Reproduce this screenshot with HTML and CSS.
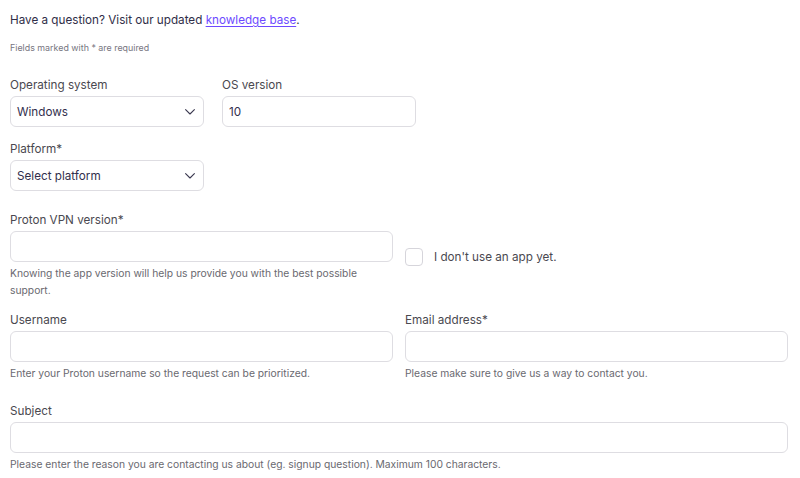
FILE: index.html
```html
<!DOCTYPE html>
<html lang="en">
<head>
<meta charset="utf-8">
<title>Support form</title>
<link rel="stylesheet" href="styles.css">
</head>
<body>
<form class="form">
  <p class="intro">Have a question? Visit our updated <a href="#" class="link">knowledge base</a>.</p>
  <p class="required-note">Fields marked with * are required</p>

  <div class="row row-small first">
    <div class="field field-narrow">
      <label class="label">Operating system</label>
      <div class="control select">
        <span class="value">Windows</span>
        <svg class="chevron" viewBox="0 0 10 6" width="10" height="6"><path d="M0.6 0.6L5 5L9.4 0.6" fill="none" stroke="#3b3950" stroke-width="1.1" stroke-linecap="round" stroke-linejoin="round"/></svg>
      </div>
    </div>
    <div class="field field-narrow">
      <label class="label">OS version</label>
      <div class="control"><span class="value">10</span></div>
    </div>
  </div>

  <div class="row row-small">
    <div class="field field-narrow">
      <label class="label">Platform*</label>
      <div class="control select">
        <span class="value">Select platform</span>
        <svg class="chevron" viewBox="0 0 10 6" width="10" height="6"><path d="M0.6 0.6L5 5L9.4 0.6" fill="none" stroke="#3b3950" stroke-width="1.1" stroke-linecap="round" stroke-linejoin="round"/></svg>
      </div>
    </div>
  </div>

  <div class="row row-half version-row">
    <div class="field">
      <label class="label">Proton VPN version*</label>
      <div class="control"></div>
      <p class="hint">Knowing the app version will help us provide you with the best possible support.</p>
    </div>
    <div class="field check-field">
      <span class="checkbox"></span>
      <span class="check-label">I don't use an app yet.</span>
    </div>
  </div>

  <div class="row row-half account-row">
    <div class="field">
      <label class="label">Username</label>
      <div class="control"></div>
      <p class="hint">Enter your Proton username so the request can be prioritized.</p>
    </div>
    <div class="field">
      <label class="label">Email address*</label>
      <div class="control"></div>
      <p class="hint">Please make sure to give us a way to contact you.</p>
    </div>
  </div>

  <div class="row subject-row">
    <div class="field field-full">
      <label class="label">Subject</label>
      <div class="control"></div>
      <p class="hint">Please enter the reason you are contacting us about (eg. signup question). Maximum 100 characters.</p>
    </div>
  </div>
</form>
</body>
</html>
```

FILE: styles.css
```css
* { box-sizing: border-box; }

html, body {
  margin: 0;
  background: #ffffff;
}

body {
  font-family: Inter, "Noto Sans", sans-serif;
  color: #2e2c45;
}

.form {
  padding: 11px 12px 0 10px;
  width: 800px;
}

.intro {
  margin: 0;
  font-size: 11.7px;
  line-height: 18px;
  color: #302e48;
}

.link {
  color: #6d4aff;
  text-decoration: underline;
  text-underline-offset: 2px;
}

.required-note {
  margin: 12px 0 0;
  font-size: 8.9px;
  line-height: 14px;
  color: #77767f;
}

/* form rows */
.row {
  display: flex;
  gap: 12px;
}

.row-small {
  gap: 18px;
  margin-top: 14px;
}

.row-small.first {
  margin-top: 22px;
}

.version-row {
  margin-top: 21px;
}

.account-row {
  margin-top: 13px;
}

.subject-row {
  margin-top: 21px;
}

.row-half > .field {
  width: 383px;
}

.field {
  display: flex;
  flex-direction: column;
}

.field-narrow {
  width: 194px;
}

.field-full {
  width: 778px;
}

.label {
  font-size: 11.7px;
  line-height: 16px;
  color: #4a4950;
  margin-bottom: 3px;
}

.control {
  height: 31px;
  border: 1px solid #dedde2;
  border-radius: 6px;
  display: flex;
  align-items: center;
  padding: 0 8px 0 6px;
  background: #fff;
}

.value {
  font-size: 11.7px;
  color: #322f4d;
  flex: 1;
}

.chevron {
  flex: none;
  display: block;
}

.hint {
  margin: 3px 0 0;
  font-size: 10.3px;
  line-height: 17px;
  color: #6a6970;
}

/* checkbox beside the version field */
.check-field {
  flex-direction: row;
  align-items: center;
  padding-top: 36px;
  align-self: flex-start;
  gap: 11px;
}

.checkbox {
  width: 18px;
  height: 18px;
  border: 1px solid #d6d5db;
  border-radius: 4px;
  flex: none;
}

.check-label {
  font-size: 11.7px;
  line-height: 18px;
  color: #4a4950;
}
```
